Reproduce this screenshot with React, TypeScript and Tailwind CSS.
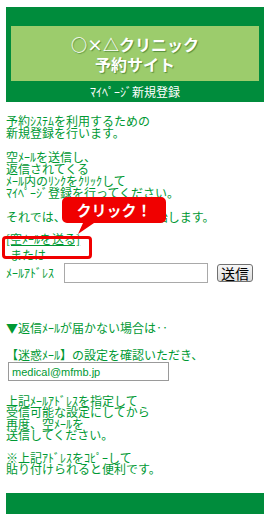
export default function App() {
  return (
    <div className="relative min-h-[523px] bg-white pb-[9px] font-['Noto_Sans_CJK_JP',sans-serif] text-[12px] text-[#009933]">
      {/* ヘッダー */}
      <header className="mx-[6px] mt-[7px] bg-[#008c3c] pt-[19px]">
        <div className="mx-[5px] flex h-[55px] flex-col items-center justify-center bg-[#9ccc6c] text-[16px] font-bold leading-[20px] text-white [text-shadow:1px_1px_1px_rgba(0,70,0,0.45)]">
          <p>○×△クリニック</p>
          <p>予約サイト</p>
        </div>
        <p className="flex h-[21px] items-center justify-center text-white">ﾏｲﾍﾟｰｼﾞ新規登録</p>
      </header>

      {/* 本文 */}
      <main className="px-[6px] pt-[13px]">
        <p className="leading-[12px]">
          予約ｼｽﾃﾑを利用するための
          <br />
          新規登録を行います。
          <br />
          <br />
          空ﾒｰﾙを送信し、
          <br />
          返信されてくる
          <br />
          ﾒｰﾙ内のﾘﾝｸをｸﾘｯｸして
          <br />
          ﾏｲﾍﾟｰｼﾞ登録を行ってください。
          <br />
          <br />
          それでは、ﾏｲﾍﾟｰｼﾞ登録を開始します。
        </p>
        <p className="mt-[10px] leading-[12px]">
          <a href="#" className="underline">
            [空ﾒｰﾙを送る]
          </a>
        </p>
        <p className="mt-[4px] pl-[4px] leading-[12px]">または</p>
        <form className="mt-[2px] flex items-center" onSubmit={(e) => e.preventDefault()}>
          <span className="w-[58px] leading-[12px]">ﾒｰﾙｱﾄﾞﾚｽ</span>
          <input type="text" className="h-[20px] w-[144px] border border-[#a9a9a9] bg-white px-[2px] text-[12px] outline-none" />
          <button className="ml-[9px] h-[18px] w-[36px] rounded-[3px] border border-[#707070] bg-linear-to-b from-[#f7f7f7] to-[#dcdcdc] text-[14px] leading-none text-black">
            送信
          </button>
        </form>

        <p className="mt-[39px] leading-[12px]">▼返信ﾒｰﾙが届かない場合は‥</p>
        <p className="mt-[15px] leading-[12px]">【迷惑ﾒｰﾙ】の設定を確認いただき、</p>
        <input
          type="text"
          readOnly
          value="medical@mfmb.jp"
          className="ml-[2px] mt-[1px] block h-[19px] w-[161px] border border-[#9a9a9a] bg-white px-[3px] font-['Liberation_Sans',sans-serif] text-[11px] text-[#009933] outline-none"
        />
        <p className="mt-[14px] leading-[11.4px]">
          上記ﾒｰﾙｱﾄﾞﾚｽを指定して
          <br />
          受信可能な設定にしてから
          <br />
          再度、空ﾒｰﾙを
          <br />
          送信してください。
          <br />
          <br />
          ※上記ｱﾄﾞﾚｽをｺﾋﾟｰして
          <br />
          貼り付けられると便利です。
        </p>
      </main>

      <footer className="mx-[6px] mt-[18px] h-[21px] bg-[#008c3c]" />

      {/* 注釈：赤枠と吹き出し */}
      <div className="pointer-events-none absolute left-[2px] top-[229px] h-[23px] w-[90px] rounded-[4px] border-[3px] border-[#f00000]" />
      <div className="pointer-events-none absolute left-[62px] top-[190px] h-[38px] w-[104px]">
        <svg width="104" height="38" viewBox="0 0 104 38" className="absolute inset-0">
          <path
            d="M5 0H99a5 5 0 0 1 5 5V21a5 5 0 0 1-5 5H32L16 37L21 26H5a5 5 0 0 1-5-5V5a5 5 0 0 1 5-5Z"
            fill="#f00000"
          />
        </svg>
        <span className="relative flex h-[26px] items-center justify-center text-[15px] font-bold text-white">
          クリック！
        </span>
      </div>
    </div>
  );
}
